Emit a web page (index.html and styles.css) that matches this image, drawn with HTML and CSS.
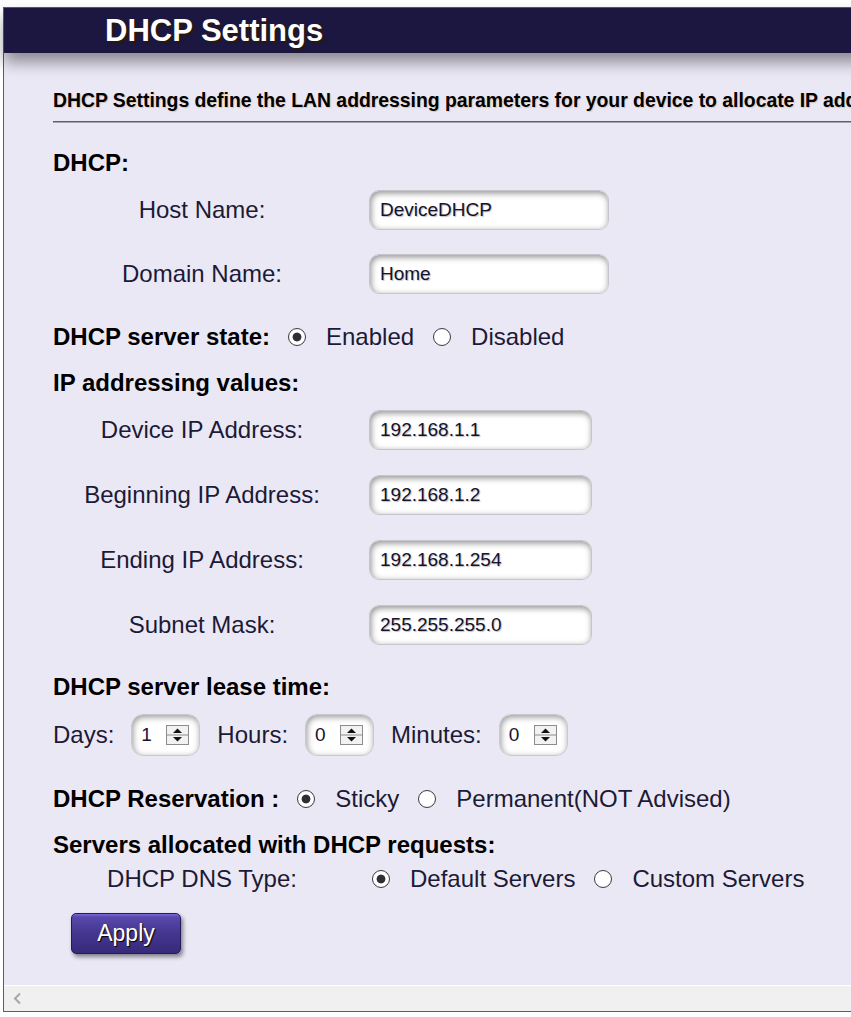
FILE: index.html
```html
<!DOCTYPE html>
<html lang="en">
<head>
<meta charset="utf-8">
<title>DHCP Settings</title>
<link rel="stylesheet" href="styles.css">
</head>
<body>
<div class="frame">
  <div class="header">
    <h1 class="title">DHCP Settings</h1>
  </div>
  <div class="content">
    <p class="desc">DHCP Settings define the LAN addressing parameters for your device to allocate IP addresses to the clients on your network.</p>
    <hr class="rule">

    <div class="heading first">DHCP:</div>
    <div class="fields">
      <label class="label">Host Name:</label>
      <input class="text" type="text" value="DeviceDHCP">
      <label class="label">Domain Name:</label>
      <input class="text" type="text" value="Home">
    </div>

    <div class="radio-row state">
      <span class="heading inline">DHCP server state:</span>
      <label class="opt"><input class="radio" type="radio" name="state" checked>Enabled</label>
      <label class="opt"><input class="radio" type="radio" name="state">Disabled</label>
    </div>

    <div class="heading sub">IP addressing values:</div>
    <div class="fields ip">
      <label class="label">Device IP Address:</label>
      <input class="text" type="text" value="192.168.1.1">
      <label class="label">Beginning IP Address:</label>
      <input class="text" type="text" value="192.168.1.2">
      <label class="label">Ending IP Address:</label>
      <input class="text" type="text" value="192.168.1.254">
      <label class="label">Subnet Mask:</label>
      <input class="text" type="text" value="255.255.255.0">
    </div>

    <div class="heading lease-title">DHCP server lease time:</div>
    <div class="lease">
      <span class="unit">Days:</span>
      <span class="spin"><span class="spin-val">1</span><svg class="spin-btn" width="23" height="20" viewBox="0 0 23 20"><rect x="0.5" y="0.5" width="22" height="19" fill="#f2f2f2" stroke="#8c8c8c"/><line x1="1" y1="10" x2="22" y2="10" stroke="#8c8c8c"/><polygon points="7,8 16,8 11.5,3.5" fill="#111"/><polygon points="7,12 16,12 11.5,16.5" fill="#111"/></svg></span>
      <span class="unit">Hours:</span>
      <span class="spin"><span class="spin-val">0</span><svg class="spin-btn" width="23" height="20" viewBox="0 0 23 20"><rect x="0.5" y="0.5" width="22" height="19" fill="#f2f2f2" stroke="#8c8c8c"/><line x1="1" y1="10" x2="22" y2="10" stroke="#8c8c8c"/><polygon points="7,8 16,8 11.5,3.5" fill="#111"/><polygon points="7,12 16,12 11.5,16.5" fill="#111"/></svg></span>
      <span class="unit">Minutes:</span>
      <span class="spin"><span class="spin-val">0</span><svg class="spin-btn" width="23" height="20" viewBox="0 0 23 20"><rect x="0.5" y="0.5" width="22" height="19" fill="#f2f2f2" stroke="#8c8c8c"/><line x1="1" y1="10" x2="22" y2="10" stroke="#8c8c8c"/><polygon points="7,8 16,8 11.5,3.5" fill="#111"/><polygon points="7,12 16,12 11.5,16.5" fill="#111"/></svg></span>
    </div>

    <div class="radio-row reservation">
      <span class="heading inline">DHCP Reservation :</span>
      <label class="opt"><input class="radio" type="radio" name="res" checked>Sticky</label>
      <label class="opt"><input class="radio" type="radio" name="res">Permanent(NOT Advised)</label>
    </div>

    <div class="heading sub">Servers allocated with DHCP requests:</div>
    <div class="dns">
      <span class="label">DHCP DNS Type:</span>
      <div class="dns-opts">
        <label class="opt"><input class="radio" type="radio" name="dns" checked>Default Servers</label>
        <label class="opt"><input class="radio" type="radio" name="dns">Custom Servers</label>
      </div>
    </div>

    <button class="apply" type="button">Apply</button>
  </div>
  <div class="hscroll">
    <svg width="9" height="13" viewBox="0 0 9 13"><polyline points="7,1.5 2,6.5 7,11.5" fill="none" stroke="#a6a6a6" stroke-width="2"/></svg>
  </div>
</div>
</body>
</html>
```
FILE: styles.css
```css
* { box-sizing: border-box; }

html, body {
  margin: 0;
  padding: 0;
  overflow: hidden;
  background: #ffffff;
}

body {
  font-family: "Liberation Sans", Arial, sans-serif;
}

.frame {
  margin: 7px 0 0 3px;
  width: 1100px;
  height: 1005px;
  border: 1px solid #5d5b6b;
  background: #ebe8f6;
  display: flex;
  flex-direction: column;
}

.header {
  flex: none;
  height: 45px;
  background: #1c1740;
  box-shadow: 0 9px 16px rgba(0, 0, 0, 0.42);
  position: relative;
  z-index: 1;
}

.title {
  margin: 0;
  padding-left: 101px;
  font-size: 31px;
  line-height: 45px;
  font-weight: bold;
  color: #ffffff;
  text-shadow: 2px 2px 2px rgba(40, 25, 10, 0.95);
}

.content {
  flex: 1;
  padding: 36px 0 0 49px;
  overflow: hidden;
}

.desc {
  margin: 0;
  font-size: 19.35px;
  line-height: 23px;
  font-weight: bold;
  color: #000000;
  white-space: nowrap;
  text-shadow: 1px 1px 1px rgba(170, 110, 40, 0.3);
}

.rule {
  margin: 9px 0 0;
  height: 2px;
  border: 0;
  border-top: 1px solid #5e5e66;
  border-bottom: 1px solid #a6a5b0;
}

.heading {
  font-size: 24px;
  line-height: 28px;
  font-weight: bold;
  color: #000000;
}

.heading.first { margin-top: 26px; }
.heading.sub { margin-top: 18px; }
.heading.lease-title { margin-top: 28px; }

.fields {
  display: grid;
  grid-template-columns: 298px 240px;
  column-gap: 18px;
  row-gap: 24px;
  align-items: center;
  margin-top: 13px;
}

.fields.ip {
  grid-template-columns: 298px 223px;
  row-gap: 25px;
}

.label {
  text-align: center;
  font-size: 24px;
  line-height: 40px;
  color: #1c1a35;
}

.text {
  width: 100%;
  height: 40px;
  margin: 0;
  padding: 0 10px;
  border: 1px solid #c6c5cc;
  border-radius: 10px;
  background: #ffffff;
  box-shadow: inset 1px 2px 6px rgba(0, 0, 0, 0.45);
  font-family: "Liberation Sans", Arial, sans-serif;
  font-size: 19px;
  color: #15132e;
  text-shadow: 1px 1px 1px rgba(0, 0, 0, 0.25);
  outline: none;
}

.radio-row {
  display: flex;
  align-items: center;
  height: 28px;
}

.radio-row.state { margin-top: 29px; }
.radio-row.reservation { margin-top: 29px; }

.radio-row .heading.inline { margin-right: 18px; }

.opt {
  display: flex;
  align-items: center;
  gap: 20px;
  font-size: 24px;
  line-height: 28px;
  color: #1c1a35;
}

.opt + .opt { margin-left: 19px; }

.radio {
  appearance: none;
  -webkit-appearance: none;
  flex: none;
  margin: 0;
  width: 18px;
  height: 18px;
  border: 1.6px solid #3a3a42;
  border-radius: 50%;
  background: #ffffff;
}

.radio:checked {
  background: radial-gradient(circle, #2e2e36 0 4px, #ffffff 4.8px);
}

.lease {
  display: flex;
  align-items: center;
  height: 42px;
  margin-top: 13px;
  font-size: 24px;
  color: #1c1a35;
}

.unit { margin-right: 17px; }
.spin + .unit { margin-left: 17px; }

.spin {
  display: flex;
  align-items: center;
  justify-content: space-between;
  width: 69px;
  height: 42px;
  padding: 0 10px 0 9px;
  border: 1px solid #c9c8cf;
  border-radius: 12px;
  background: #ffffff;
  box-shadow: inset 1px 2px 6px rgba(0, 0, 0, 0.42);
}

.spin-val {
  font-size: 19px;
  color: #15132e;
}

.spin-btn { display: block; }

.dns {
  display: grid;
  grid-template-columns: 298px auto;
  column-gap: 18px;
  align-items: center;
  margin-top: 6px;
}

.dns .label { line-height: 28px; }

.dns-opts {
  display: flex;
  align-items: center;
  padding-left: 3px;
}

.apply {
  display: block;
  margin: 20px 0 0 18px;
  width: 110px;
  height: 41px;
  padding: 0;
  border: 1px solid #231a5a;
  border-radius: 5px;
  background: linear-gradient(#7a69d8 0, #5848ac 3px, #44368f 50%, #372a7a 100%);
  box-shadow: 2px 3px 4px rgba(0, 0, 0, 0.45);
  font-family: "Liberation Sans", Arial, sans-serif;
  font-size: 23px;
  color: #ffffff;
  text-shadow: 1px 1px 1px #000000;
}

.hscroll {
  flex: none;
  height: 26px;
  display: flex;
  align-items: center;
  padding-left: 9px;
  background: #f0f0f0;
  border-top: 1px solid #ffffff;
}

.hscroll svg { display: block; }
```
